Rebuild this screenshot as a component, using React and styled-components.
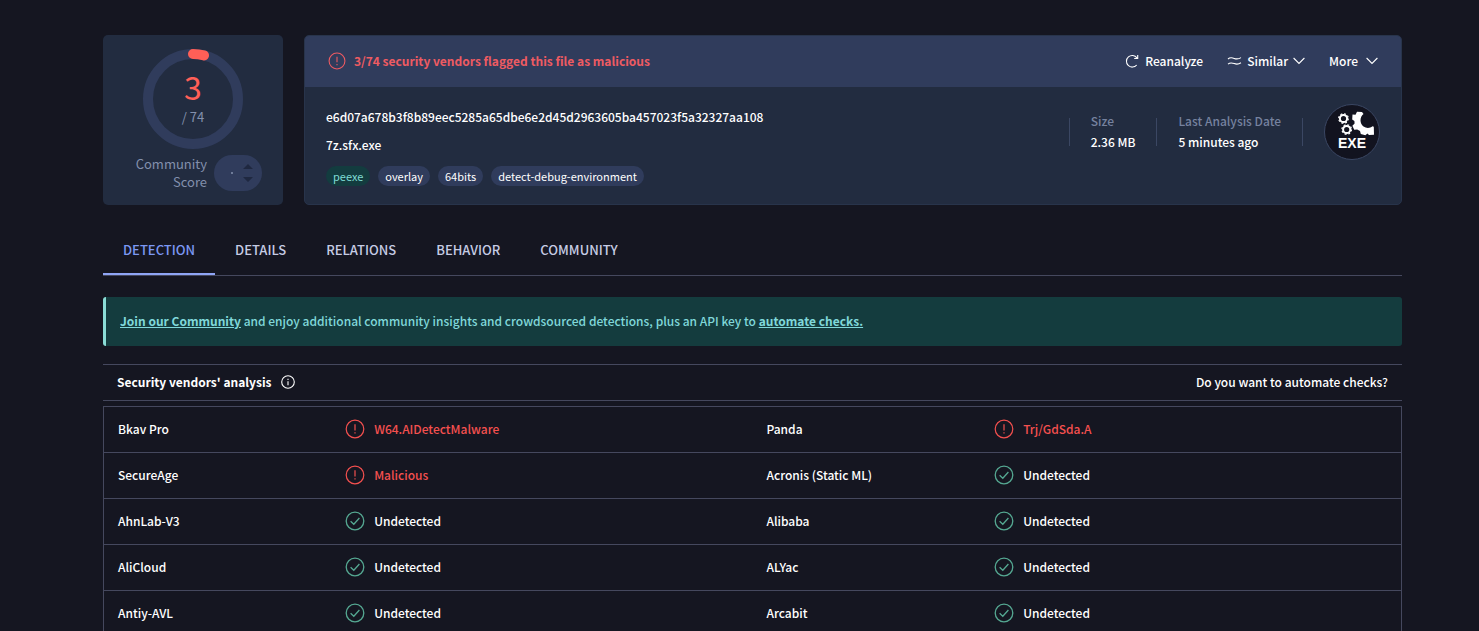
import React from "react";
import styled, { createGlobalStyle } from "styled-components";

const red = "#ff5f57";
const line = "#45485e";

const tags = [
  { name: "peexe", green: true },
  { name: "overlay" },
  { name: "64bits" },
  { name: "detect-debug-environment" },
];

const tabs = ["Detection", "Details", "Relations", "Behavior", "Community"];

const rows = [
  [
    { vendor: "Bkav Pro", result: "W64.AIDetectMalware", bad: true },
    { vendor: "Panda", result: "Trj/GdSda.A", bad: true },
  ],
  [
    { vendor: "SecureAge", result: "Malicious", bad: true },
    { vendor: "Acronis (Static ML)", result: "Undetected" },
  ],
  [
    { vendor: "AhnLab-V3", result: "Undetected" },
    { vendor: "Alibaba", result: "Undetected" },
  ],
  [
    { vendor: "AliCloud", result: "Undetected" },
    { vendor: "ALYac", result: "Undetected" },
  ],
  [
    { vendor: "Antiy-AVL", result: "Undetected" },
    { vendor: "Arcabit", result: "Undetected" },
  ],
];

const AlertIcon = ({ size = 20 }) => (
  <svg width={size} height={size} viewBox="0 0 20 20" fill="none" stroke="currentColor" strokeWidth="1.2">
    <circle cx="10" cy="10" r="8.8" />
    <path d="M10 5.2v6.2M10 13.2v1.4" />
  </svg>
);

const CheckIcon = () => (
  <svg width="20" height="20" viewBox="0 0 20 20" fill="none" stroke="#55a892" strokeWidth="1.3">
    <circle cx="10" cy="10" r="8.8" />
    <path d="M5.6 10.2l3.2 3 5.6-6.2" />
  </svg>
);

const InfoIcon = () => (
  <svg width="14" height="14" viewBox="0 0 14 14" fill="none" stroke="currentColor" strokeWidth="1.1">
    <circle cx="7" cy="7" r="6.3" />
    <path d="M7 6.2v4M7 3.8v1.2" />
  </svg>
);

const ReloadIcon = () => (
  <svg width="14" height="14" viewBox="0 0 14 14" fill="none" stroke="currentColor" strokeWidth="1.1">
    <path d="M11.7 11A5.8 5.8 0 1 1 11.9 3.8M12.7 1v3.5H9.2" />
  </svg>
);

const SimilarIcon = () => (
  <svg width="15" height="10" viewBox="0 0 15 10" fill="none" stroke="currentColor" strokeWidth="1.1">
    <path d="M1 3c2.2-2 4-1.4 6.2-.6s4.2.9 6.8-.8M1 8.2c2.2-2 4-1.4 6.2-.6s4.2.9 6.8-.8" />
  </svg>
);

const Chevron = () => (
  <svg width="12" height="8" viewBox="0 0 12 8" fill="none" stroke="currentColor" strokeWidth="1.1">
    <path d="M.6 1L6 6.5 11.4 1" />
  </svg>
);

const ScoreRing = () => (
  <svg width="100" height="100" viewBox="0 0 100 100" fill="none" strokeWidth="10">
    <circle cx="50" cy="50" r="45" stroke="#303c5c" />
    <path d="M50 5A45 45 0 0 1 61 6.4" stroke={red} strokeLinecap="round" />
  </svg>
);

const ExeIcon = () => (
  <svg width="56" height="56" viewBox="0 0 56 56" fill="none">
    <circle cx="28" cy="28" r="27.5" fill="#12131f" stroke="#3b4763" />
    <g stroke="#fff">
      <circle cx="19.5" cy="14.5" r="3.6" strokeWidth="2" />
      <circle cx="19.5" cy="14.5" r="4.8" strokeWidth="1.2" strokeDasharray="1.9 1.87" />
      <circle cx="22.7" cy="25.5" r="3.6" strokeWidth="2" />
      <circle cx="22.7" cy="25.5" r="4.8" strokeWidth="1.2" strokeDasharray="1.9 1.87" />
    </g>
    <path
      d="M28.5 10.5l3 .2 1.5-3 5 .4 1.5 1.8C35.5 13 35.5 19.5 39.5 22.5c3 2 6.500 1.800 9-.3l1.300.6.200 8-5 .2-1.600-1.500-2 1.700-4.600-1.200-.8-3-2.800-1.600-3 .4-1.800-4 2.200-2.200-.2-2.600-2.200-1.600z"
      fill="#fff"
    />
    <text x="28" y="44" textAnchor="middle" fill="#fff" fontFamily="Liberation Sans, sans-serif" fontWeight="700" fontSize="14">
      EXE
    </text>
  </svg>
);

const App = () => {
  return (
    <Page>
      <GlobalStyle />
      <Summary>
        <ScoreCard>
          <Gauge>
            <ScoreRing />
            <GaugeText>
              <strong>3</strong>
              <span>/ 74</span>
            </GaugeText>
          </Gauge>
          <Community>
            <span>Community Score</span>
            <Votes>
              <i />
              <svg width="10" height="20" viewBox="0 0 10 20" fill="#1f2840">
                <path d="M0 6l5-5 5 5zM0 14h10l-5 5z" />
              </svg>
            </Votes>
          </Community>
        </ScoreCard>

        <FileCard>
          <Banner>
            <Flag>
              <AlertIcon size={18} />
              3/74 security vendors flagged this file as malicious
            </Flag>
            <Actions>
              <Action $gap={6}>
                <ReloadIcon />
                Reanalyze
              </Action>
              <Action $gap={5}>
                <SimilarIcon />
                Similar
                <Chevron />
              </Action>
              <Action $gap={8}>
                More
                <Chevron />
              </Action>
            </Actions>
          </Banner>
          <FileBody>
            <FileInfo>
              <p>e6d07a678b3f8b89eec5285a65dbe6e2d45d2963605ba457023f5a32327aa108</p>
              <p>7z.sfx.exe</p>
              <Tags>
                {tags.map(({ name, green }) => (
                  <Tag key={name} href="#" $green={green}>
                    {name}
                  </Tag>
                ))}
              </Tags>
            </FileInfo>
            <Facts>
              <Fact>
                <span>Size</span>
                <a href="#">2.36 MB</a>
              </Fact>
              <Fact>
                <span>Last Analysis Date</span>
                <a href="#">5 minutes ago</a>
              </Fact>
              <FileType>
                <ExeIcon />
              </FileType>
            </Facts>
          </FileBody>
        </FileCard>
      </Summary>

      <Tabs>
        {tabs.map((tab, i) => (
          <Tab key={tab} href="#" $active={i === 0}>
            {tab}
          </Tab>
        ))}
      </Tabs>

      <Notice>
        <a href="#">Join our Community</a> and enjoy additional community insights and crowdsourced detections, plus an
        API key to <a href="#">automate checks.</a>
      </Notice>

      <AnalysisHead>
        <h2>
          Security vendors' analysis
          <InfoIcon />
        </h2>
        <a href="#">Do you want to automate checks?</a>
      </AnalysisHead>

      <Results>
        <tbody>
          {rows.map((row) => (
            <tr key={row[0].vendor}>
              {row.map(({ vendor, result, bad }) => (
                <React.Fragment key={vendor}>
                  <VendorCell>{vendor}</VendorCell>
                  <ResultCell>
                    <Result $bad={bad}>
                      {bad ? <AlertIcon /> : <CheckIcon />}
                      {result}
                    </Result>
                  </ResultCell>
                </React.Fragment>
              ))}
            </tr>
          ))}
        </tbody>
      </Results>
    </Page>
  );
};

const GlobalStyle = createGlobalStyle`
  * {
    box-sizing: border-box;
  }
  body {
    margin: 0;
    background-color: #151621;
    color: #fff;
    font-family: "Noto Sans CJK SC", "Noto Sans", sans-serif;
    font-size: 12px;
    font-weight: 500;
    line-height: 20px;
    height: 100vh;
    overflow: hidden;
  }
  a {
    color: inherit;
    text-decoration: none;
  }
  svg {
    display: block;
    flex: none;
  }
`;

const Page = styled.main`
  padding: 35px 77px 0 103px;
`;

const Summary = styled.section`
  display: flex;
  gap: 21px;
  min-height: 170px;
`;

const ScoreCard = styled.div`
  width: 180px;
  flex: none;
  padding-top: 14px;
  border-radius: 5px;
  background-color: #222c40;
  color: #8390ad;
  font-size: 13px;
  font-weight: 400;
`;

const Gauge = styled.div`
  display: grid;
  justify-items: center;
  > * {
    grid-area: 1 / 1;
  }
`;

const GaugeText = styled.div`
  display: flex;
  flex-direction: column;
  align-items: center;
  padding-top: 16px;
  strong {
    color: ${red};
    font-size: 32px;
    font-weight: 400;
    line-height: 42px;
  }
`;

const Community = styled.div`
  display: flex;
  align-items: center;
  justify-content: flex-end;
  gap: 7px;
  padding: 6px 21px 0 0;
  line-height: 18px;
  > span {
    width: 72px;
    text-align: right;
  }
`;

const Votes = styled.div`
  display: flex;
  align-items: center;
  justify-content: space-between;
  width: 48px;
  height: 36px;
  padding: 0 9px 0 17px;
  border-radius: 18px;
  background-color: #303c5c;
  i {
    width: 2px;
    height: 2px;
    border-radius: 50%;
    background-color: #8390ad;
  }
`;

const FileCard = styled.div`
  flex: 1;
  min-width: 0;
  overflow: hidden;
  border: 1px solid #28344b;
  border-radius: 5px;
  background-color: #222c40;
`;

const Banner = styled.div`
  display: flex;
  align-items: center;
  justify-content: space-between;
  height: 51px;
  padding: 0 23px 1px;
  background-color: #303c5c;
`;

const Flag = styled.div`
  display: flex;
  align-items: center;
  gap: 8px;
  color: #ee5b62;
  font-weight: 700;
`;

const Actions = styled.div`
  display: flex;
  gap: 24px;
`;

const Action = styled.button`
  display: flex;
  align-items: center;
  gap: ${({ $gap }) => $gap}px;
  padding: 0;
  border: none;
  background: none;
  color: #fff;
  font: inherit;
  cursor: pointer;
`;

const FileBody = styled.div`
  display: flex;
  justify-content: space-between;
  padding: 16px 21px 0;
`;

const FileInfo = styled.div`
  p {
    margin: 0;
    line-height: 28px;
  }
`;

const Tags = styled.div`
  display: flex;
  gap: 8px;
  padding-top: 7px;
`;

const Tag = styled.a`
  padding: 0 7px;
  border-radius: 10px;
  background-color: ${({ $green }) => ($green ? "#133c3f" : "#303c5c")};
  color: ${({ $green }) => ($green ? "#7fdcd4" : "#fff")};
  font-size: 11px;
  font-weight: 400;
`;

const Facts = styled.div`
  display: flex;
  align-items: flex-start;
  padding-top: 15px;
`;

const Fact = styled.div`
  display: flex;
  flex-direction: column;
  padding: 0 21px 2px;
  border-left: 1px solid #3b4763;
  line-height: 21px;
  height: 28px;
  justify-content: center;
  white-space: nowrap;
  span {
    color: #76829f;
  }
`;

const FileType = styled.div`
  display: flex;
  align-items: center;
  height: 28px;
  padding-left: 21px;
  border-left: 1px solid #3b4763;
`;

const Tabs = styled.nav`
  display: flex;
  height: 51px;
  margin-top: 20px;
  border-bottom: 1px solid ${line};
`;

const Tab = styled.a`
  height: 50px;
  padding: 15px 20px 0;
  border-bottom: 2px solid ${({ $active }) => ($active ? "#8fa5f5" : "transparent")};
  color: ${({ $active }) => ($active ? "#7c98f3" : "#c6cce4")};
  font-size: 13px;
  text-transform: uppercase;
`;

const Notice = styled.div`
  margin-top: 21px;
  padding: 14px 14px 15px;
  border-left: 3px solid #8adcd6;
  border-radius: 3px;
  background-color: #143c3e;
  color: #80d8da;
  a {
    font-weight: 700;
    text-decoration: underline;
  }
`;

const AnalysisHead = styled.header`
  display: flex;
  align-items: center;
  justify-content: space-between;
  height: 37px;
  margin: 18px 0 5px;
  padding: 0 14px 1px;
  border: solid ${line};
  border-width: 1px 0;
  h2 {
    display: flex;
    align-items: center;
    gap: 10px;
    margin: 0;
    font-size: 12px;
    font-weight: 700;
  }
`;

const Results = styled.table`
  width: 100%;
  table-layout: fixed;
  border-collapse: collapse;
  border: 1px solid ${line};
  tr {
    height: 46px;
    border-bottom: 1px solid ${line};
  }
  td {
    padding: 0 0 2px;
  }
`;

const VendorCell = styled.td`
  width: 17%;
  && {
    padding-left: 14px;
  }
`;

const ResultCell = styled.td`
  width: 33%;
  && {
    padding-left: 21px;
  }
`;

const Result = styled.div`
  display: flex;
  align-items: center;
  gap: 9px;
  color: ${({ $bad }) => ($bad ? "#f4504f" : "#fff")};
`;

export default App;
